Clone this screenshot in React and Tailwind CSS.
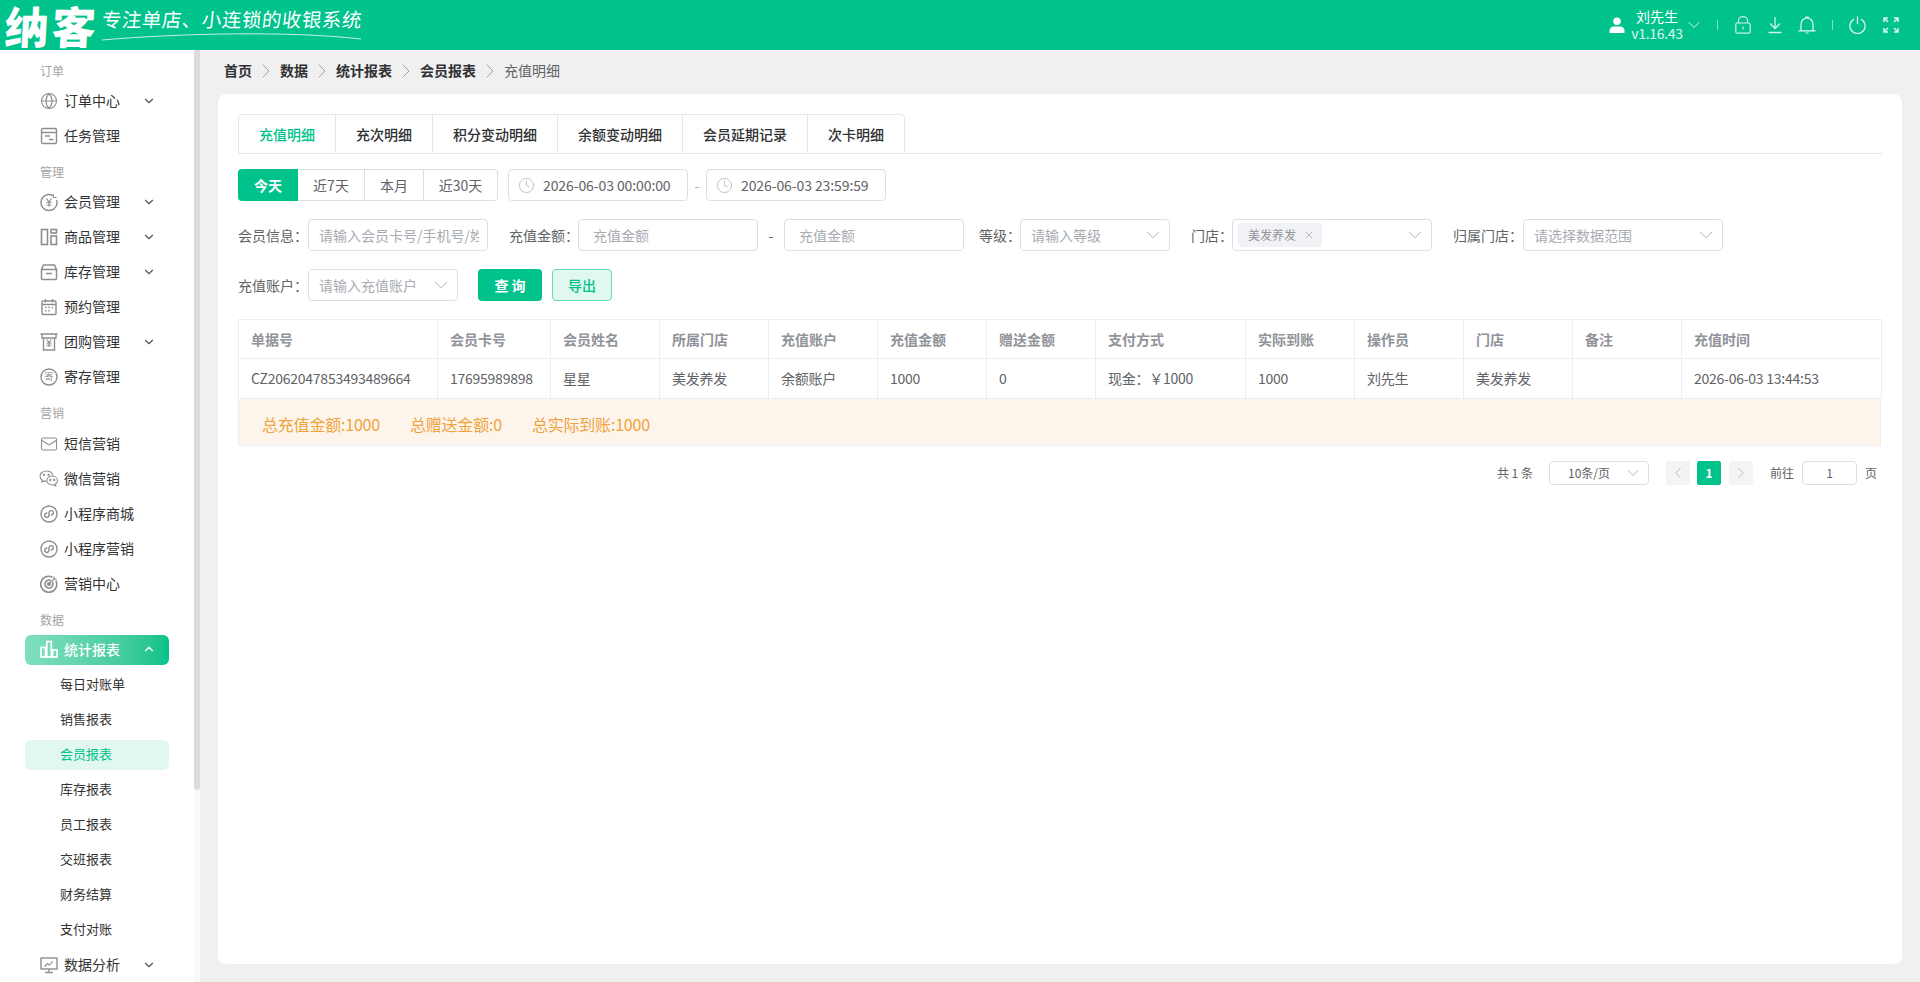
import React from "react";
import { ChevronDown, ChevronUp, ChevronRight, ChevronLeft, Clock, Globe, Mail, X } from "lucide-react";

const ic = { width: 18, height: 18, viewBox: "0 0 18 18", fill: "none", stroke: "#8e8e8e", strokeWidth: 1.4 };

const TaskIcon = () => (
  <svg {...ic}>
    <rect x="1.5" y="1.5" width="15" height="15" rx="1.5" />
    <path d="M1.5 5.5h15M5 9h5M9 12.5h4.5" />
  </svg>
);
const MemberIcon = () => (
  <svg {...ic}>
    <path d="M13 2.6A8 8 0 1 0 16.6 7" />
    <path d="M6.5 5.5 9 9l2.5-3.5M6.5 9.5h5M6.5 12h5M9 9v4.5" strokeWidth="1.2" />
    <path d="M13.5 1.5v3h3" strokeWidth="1.1" />
  </svg>
);
const GoodsIcon = () => (
  <svg {...ic} strokeWidth="1.6">
    <rect x="1.5" y="1.5" width="6" height="15" />
    <rect x="11" y="1.5" width="5.5" height="3.5" />
    <rect x="11" y="8" width="5.5" height="8.5" />
  </svg>
);
const StockIcon = () => (
  <svg {...ic} strokeWidth="1.5">
    <path d="M3.5 2h11l2 4.5v9a1 1 0 0 1-1 1h-13a1 1 0 0 1-1-1v-9z" />
    <path d="M1.5 6.5h15M6 10.5h6" />
  </svg>
);
const CalendarIcon = () => (
  <svg {...ic}>
    <rect x="2" y="3" width="14" height="13.5" rx="1" />
    <path d="M2 6.5h14M5.5 1v3.5M12.5 1v3.5" />
    <path d="M5 9.5h1.5M8.3 9.5h1.5M11.6 9.5h1.5M5 12.8h1.5M8.3 12.8h1.5" />
  </svg>
);
const GroupIcon = () => (
  <svg {...ic}>
    <path d="M0.5 1h17M2 1v4h14V1M3.5 5v12h11V5" />
    <path d="M6.7 6.5 9 9.5l2.3-3M6.5 10h5M6.5 12.3h5M9 9.5v4.5" strokeWidth="1.1" />
  </svg>
);
const DepositIcon = () => (
  <svg {...ic}>
    <circle cx="9" cy="9" r="8" />
    <text x="9" y="12.2" textAnchor="middle" fontSize="9" fill="#8e8e8e" stroke="none" fontFamily="'Noto Sans CJK SC'">寄</text>
  </svg>
);
const WechatIcon = () => (
  <svg width="20" height="18" viewBox="0 0 20 18" fill="none" stroke="#8e8e8e" strokeWidth="1.1" className="-ml-[1px] -mr-[1px]">
    <path d="M7.5 1C3.9 1 1 3.3 1 6.2c0 1.6.9 3 2.3 4l-.5 1.8 2.1-1.1c.7.2 1.4.3 2.1.3" />
    <path d="M7.5 1c3 0 5.5 1.7 6.2 4.1" />
    <path d="M13.2 6c-3 0-5.5 2-5.5 4.5S10.2 15 13.2 15c.6 0 1.2-.1 1.7-.2l1.8 1-.4-1.6c1.3-.8 2.2-2.2 2.2-3.7C18.5 8 16.2 6 13.2 6z" />
    <circle cx="5" cy="4.8" r=".6" fill="#8e8e8e" />
    <circle cx="9.5" cy="4.8" r=".6" fill="#8e8e8e" />
    <circle cx="11.3" cy="10" r=".6" fill="#8e8e8e" />
    <circle cx="15.2" cy="10" r=".6" fill="#8e8e8e" />
  </svg>
);
const MiniIcon = () => (
  <svg {...ic}>
    <circle cx="9" cy="9" r="8" />
    <path d="M7.4 8.1A2.2 2.2 0 1 0 9 10.3V7.6a2.2 2.2 0 1 1 1.6 2.3" />
  </svg>
);
const TargetIcon = () => (
  <svg {...ic} strokeWidth="1.6">
    <path d="M12.5 2.2A8 8 0 1 0 15.8 5.5" />
    <path d="M10.8 5.5a4 4 0 1 0 1.7 1.7" />
    <circle cx="9" cy="9" r="1.3" fill="#8e8e8e" />
    <path d="M9 9l6-6M14 1.5V4h2.5" strokeWidth="1.2" />
  </svg>
);
const StatsIcon = () => (
  <svg width="18" height="18" viewBox="0 0 18 18" fill="none" stroke="#fff" strokeWidth="1.7">
    <rect x="1" y="7.5" width="4.5" height="9.5" />
    <rect x="6.8" y="1.5" width="4.5" height="15.5" />
    <rect x="12.6" y="10" width="4.5" height="7" />
  </svg>
);
const AnalysisIcon = () => (
  <svg {...ic}>
    <rect x="1" y="2" width="16" height="11" />
    <path d="M9 13v3M5 16.5h8" />
    <path d="M4.5 10.5 7.5 7.5l2 1.5 3.500-4" strokeWidth="1.1" />
  </svg>
);

// top bar
const UserIcon = () => (
  <svg width="16" height="16" viewBox="0 0 16 16" fill="#fff">
    <circle cx="8" cy="4.3" r="3.8" />
    <path d="M0.5 16v-2.2C0.5 11 3 9.5 5 9.5h6c2 0 4.5 1.5 4.5 4.3V16z" />
  </svg>
);
const LockIcon = () => (
  <svg width="16" height="18" viewBox="0 0 16 18" fill="none" stroke="#fff" strokeOpacity=".8" strokeWidth="1.2">
    <rect x="0.8" y="7" width="14.4" height="10.2" rx="1.5" />
    <path d="M3.5 7V4.5a4.5 3.8 0 0 1 9 0V7M8 10.5v3" />
  </svg>
);
const DownIcon = () => (
  <svg width="16" height="18" viewBox="0 0 16 18" fill="none" stroke="#fff" strokeOpacity=".8" strokeWidth="1.3">
    <path d="M8 1v11M3 7.5l5 5 5-5M1.5 16.5h13" />
  </svg>
);
const BellIcon = () => (
  <svg width="18" height="19" viewBox="0 0 18 19" fill="none" stroke="#fff" strokeOpacity=".9" strokeWidth="1.2">
    <path d="M3 14.5V8a6 6 0 0 1 12 0v6.5M0.5 14.8h17" />
    <path d="M8 2V1h2v1M7.5 17h3" />
  </svg>
);
const PowerIcon = () => (
  <svg width="17" height="18" viewBox="0 0 17 18" fill="none" stroke="#fff" strokeOpacity=".85" strokeWidth="1.3">
    <path d="M5 3.2a7.6 7.6 0 1 0 7 0" />
    <path d="M8.5 0.5v7.5" />
  </svg>
);
const ExpandIcon = () => (
  <svg width="16" height="16" viewBox="0 0 16 16" fill="none" stroke="#fff" strokeOpacity=".85" strokeWidth="1.5">
    <path d="M1 5V1h4M1 1l4 4M11 1h4v4M15 1l-4 4M1 11v4h4M1 15l4-4M15 11v4h-4M15 15l-4-4" />
  </svg>
);

const menu = [
  { label: "订单", h: "h-[31px]", items: [
    { name: "订单中心", icon: <Globe size={18} strokeWidth={1.5} color="#8e8e8e" />, arrow: true },
    { name: "任务管理", icon: <TaskIcon /> },
  ] },
  { label: "管理", h: "h-[31px]", items: [
    { name: "会员管理", icon: <MemberIcon />, arrow: true },
    { name: "商品管理", icon: <GoodsIcon />, arrow: true },
    { name: "库存管理", icon: <StockIcon />, arrow: true },
    { name: "预约管理", icon: <CalendarIcon /> },
    { name: "团购管理", icon: <GroupIcon />, arrow: true },
    { name: "寄存管理", icon: <DepositIcon /> },
  ] },
  { label: "营销", h: "h-[32px]", items: [
    { name: "短信营销", icon: <Mail size={18} strokeWidth={1.4} color="#8e8e8e" /> },
    { name: "微信营销", icon: <WechatIcon /> },
    { name: "小程序商城", icon: <MiniIcon /> },
    { name: "小程序营销", icon: <MiniIcon /> },
    { name: "营销中心", icon: <TargetIcon /> },
  ] },
];

const subItems = ["每日对账单", "销售报表", "会员报表", "库存报表", "员工报表", "交班报表", "财务结算", "支付对账"];

const SectionLabel = ({ text, h }) => (
  <div className={`${h} pl-[40px] pt-[7px] text-[12px] leading-[24px] text-[#a3a3a3]`}>{text}</div>
);

const MenuItem = ({ item }) => (
  <div className="h-[35px] flex items-center pl-[40px] text-[14px] text-[#333]">
    <span className="w-[18px] h-[18px] flex items-center justify-center shrink-0">{item.icon}</span>
    <span className="ml-[6px] w-[78px]">{item.name}</span>
    {item.arrow && <ChevronDown size={14} color="#555" />}
  </div>
);

const Sidebar = () => (
  <aside className="relative w-[200px] shrink-0 bg-white overflow-hidden pt-[2px]">
    {menu.map((sec) => (
      <div key={sec.label}>
        <SectionLabel text={sec.label} h={sec.h} />
        {sec.items.map((item) => (
          <MenuItem item={item} key={item.name} />
        ))}
      </div>
    ))}
    <SectionLabel text="数据" h="h-[31px]" />
    <div className="h-[34px] flex items-center">
      <div className="ml-[25px] mt-[2px] w-[144px] h-[30px] pb-[2px] rounded-[6px] bg-gradient-to-r from-[#80dfc2] to-[#00c28b] flex items-center pl-[15px] text-[14px] font-medium text-white">
        <StatsIcon />
        <span className="ml-[6px] w-[78px]">统计报表</span>
        <ChevronUp size={14} color="#fff" />
      </div>
    </div>
    {subItems.map((name) => (
      <div key={name} className="h-[35px] flex items-center">
        {name === "会员报表" ? (
          <div className="ml-[25px] mt-[2px] w-[144px] h-[30px] pb-[2px] rounded-[6px] bg-[#e0f8f0] flex items-center pl-[35px] text-[13px] text-[#00c28b]">
            {name}
          </div>
        ) : (
          <div className="pl-[60px] text-[13px] text-[#333]">{name}</div>
        )}
      </div>
    ))}
    <div className="mt-[1px]">
      <MenuItem item={{ name: "数据分析", icon: <AnalysisIcon />, arrow: true }} />
    </div>
    {/* scrollbar */}
    <div className="absolute top-0 right-0 bottom-0 w-[6px] bg-[#fafafa]">
      <div className="h-[740px] bg-[#dcdcdc] rounded-b-[3px]" />
    </div>
  </aside>
);

const TopBar = () => (
  <header className="h-[50px] shrink-0 bg-[#00c28b] flex items-center text-white">
    <div className="ml-[5px] w-[96px] text-[44px] leading-[44px] font-black tracking-[3px] -skew-x-3 whitespace-nowrap">纳客</div>
    <div className="ml-[1px] flex flex-col">
      <div className="text-[19.5px] leading-[24px] -mt-[2px] -skew-x-6 tracking-[0.5px] whitespace-nowrap">专注单店、小连锁的收银系统</div>
      <svg width="260" height="9" viewBox="0 0 260 9" fill="none" className="mt-[1px]">
        <path d="M0 8C80 1 190-1 259 7" stroke="#fff" strokeOpacity=".85" strokeWidth=".9" />
      </svg>
    </div>
    <div className="ml-auto flex items-center">
      <UserIcon />
      <div className="ml-[7px] w-[50px] flex flex-col items-center text-[14px] leading-[17px] whitespace-nowrap">
        <span>刘先生</span>
        <span className="text-white/85 tracking-[-0.3px]">v1.16.43</span>
      </div>
      <ChevronDown size={20} className="ml-[2px]" color="#fff" strokeWidth={1} />
      <span className="ml-[13px] w-[1px] h-[10px] bg-white/50" />
      <span className="ml-[17px]"><LockIcon /></span>
      <span className="ml-[16px]"><DownIcon /></span>
      <span className="ml-[15px]"><BellIcon /></span>
      <span className="ml-[16px] w-[1px] h-[10px] bg-white/50" />
      <span className="ml-[16px]"><PowerIcon /></span>
      <span className="ml-[17px] mr-[21px]"><ExpandIcon /></span>
    </div>
  </header>
);

const crumbs = ["首页", "数据", "统计报表", "会员报表"];

const Breadcrumb = () => (
  <div className="h-[44px] flex items-center pl-[6px] pb-[3px] text-[14px]">
    {crumbs.map((c) => (
      <React.Fragment key={c}>
        <span className="font-bold text-[#303133]">{c}</span>
        <span className="w-[28px] flex justify-center"><ChevronRight size={24} strokeWidth={1} color="#a0a0a0" /></span>
      </React.Fragment>
    ))}
    <span className="text-[#606266]">充值明细</span>
  </div>
);

const tabs = [
  { name: "充值明细", w: "w-[96px]" },
  { name: "充次明细", w: "w-[97px]" },
  { name: "积分变动明细", w: "w-[125px]" },
  { name: "余额变动明细", w: "w-[125px]" },
  { name: "会员延期记录", w: "w-[125px]" },
  { name: "次卡明细", w: "w-[97px]" },
];

const Tabs = () => (
  <div className="h-[40px] border-b border-[#e4e7ed]">
    <div className="inline-flex h-[40px] border border-[#e4e7ed] rounded-t-[4px]">
      {tabs.map((t, i) => (
        <div
          key={t.name}
          className={`${t.w} flex items-center justify-center text-[14px] font-medium ${i === 0 ? "text-[#00c28b]" : "text-[#303133] border-l border-[#e4e7ed]"}`}
        >
          {t.name}
        </div>
      ))}
    </div>
  </div>
);

const ranges = [
  { name: "近7天", w: "w-[67px]" },
  { name: "本月", w: "w-[59px]" },
  { name: "近30天", w: "w-[74px]" },
];

const DateBox = ({ value }) => (
  <div className="w-[180px] h-[32px] border border-[#dcdfe6] rounded-[4px] flex items-center pl-[9px] text-[14px] text-[#606266]">
    <Clock size={17} strokeWidth={1} color="#a8abb2" />
    <span className="ml-[8px] whitespace-nowrap tracking-[-0.1px]">{value}</span>
  </div>
);

const Input = ({ placeholder, w = "w-[180px]", px = "pl-[10px] pr-[8px]" }) => (
  <div className={`${w} h-[32px] shrink-0 border border-[#dcdfe6] rounded-[4px] flex items-center ${px} text-[14px] text-[#a8abb2]`}>
    <span className="block overflow-hidden whitespace-nowrap">{placeholder}</span>
  </div>
);

const Select = ({ placeholder, w }) => (
  <div className={`${w} h-[32px] shrink-0 border border-[#dcdfe6] rounded-[4px] flex items-center justify-between pl-[10px] pr-[5px] text-[14px] text-[#a8abb2] whitespace-nowrap`}>
    <span>{placeholder}</span>
    <ChevronDown size={22} strokeWidth={1} color="#a8abb2" />
  </div>
);

const Label = ({ text, w = "w-[70px]", ml = "" }) => (
  <span className={`${w} ${ml} shrink-0 text-[14px] text-[#606266] whitespace-nowrap`}>{text}</span>
);

const Filters = () => (
  <div className="flex flex-col gap-[18px] mt-[15px]">
    <div className="flex items-center h-[32px]">
      <div className="flex h-[32px] text-[14px]">
        <div className="w-[60px] bg-[#00c28b] rounded-l-[4px] flex items-center justify-center text-white font-bold">今天</div>
        {ranges.map((r, i) => (
          <div
            key={r.name}
            className={`${r.w} border-y border-r border-[#dcdfe6] flex items-center justify-center text-[#606266] ${i === 2 ? "rounded-r-[4px]" : ""}`}
          >
            {r.name}
          </div>
        ))}
      </div>
      <div className="ml-[10px]"><DateBox value="2026-06-03 00:00:00" /></div>
      <span className="w-[18px] text-center text-[14px] text-[#a8abb2]">-</span>
      <DateBox value="2026-06-03 23:59:59" />
    </div>

    <div className="flex items-center h-[32px]">
      <Label text="会员信息：" />
      <Input placeholder="请输入会员卡号/手机号/姓名" />
      <Label text="充值金额：" w="w-[69px]" ml="ml-[21px]" />
      <Input placeholder="充值金额" px="px-[14px]" />
      <span className="w-[26px] text-center text-[14px] text-[#606266]">-</span>
      <Input placeholder="充值金额" px="px-[14px]" />
      <Label text="等级：" w="w-[41px]" ml="ml-[15px]" />
      <Select placeholder="请输入等级" w="w-[150px]" />
      <Label text="门店：" w="w-[41px]" ml="ml-[21px]" />
      <div className="w-[200px] h-[32px] shrink-0 border border-[#dcdfe6] rounded-[4px] flex items-center justify-between pl-[5px] pr-[5px]">
        <span className="w-[84px] h-[24px] bg-[#f0f2f5] rounded-[4px] flex items-center pl-[10px] text-[12px] text-[#909399]">
          美发养发
          <X size={12} strokeWidth={1.2} className="ml-[7px]" />
        </span>
        <ChevronDown size={22} strokeWidth={1} color="#a8abb2" />
      </div>
      <Label text="归属门店：" ml="ml-[21px]" />
      <Select placeholder="请选择数据范围" w="w-[200px]" />
    </div>

    <div className="flex items-center h-[32px]">
      <Label text="充值账户：" />
      <Select placeholder="请输入充值账户" w="w-[150px]" />
      <div className="ml-[20px] w-[64px] h-[32px] rounded-[4px] bg-[#00c28b] flex items-center justify-center text-[14px] font-bold text-white whitespace-pre">查 询</div>
      <div className="ml-[10px] w-[60px] h-[32px] rounded-[4px] bg-[#e0f8f0] border border-[#66dab9] flex items-center justify-center text-[14px] font-medium text-[#00c28b]">导出</div>
    </div>
  </div>
);

const columns = [
  { name: "单据号", w: "w-[199px]", value: "CZ2062047853493489664" },
  { name: "会员卡号", w: "w-[113px]", value: "17695989898" },
  { name: "会员姓名", w: "w-[109px]", value: "星星" },
  { name: "所属门店", w: "w-[109px]", value: "美发养发" },
  { name: "充值账户", w: "w-[109px]", value: "余额账户" },
  { name: "充值金额", w: "w-[109px]", value: "1000" },
  { name: "赠送金额", w: "w-[109px]", value: "0" },
  { name: "支付方式", w: "w-[150px]", value: "现金：￥1000" },
  { name: "实际到账", w: "w-[109px]", value: "1000" },
  { name: "操作员", w: "w-[109px]", value: "刘先生" },
  { name: "门店", w: "w-[109px]", value: "美发养发" },
  { name: "备注", w: "w-[109px]", value: "" },
  { name: "充值时间", w: "w-[200px]", value: "2026-06-03 13:44:53" },
];

const Table = () => (
  <div className="mt-[18px]">
    <table className="w-[1643px] table-fixed border-collapse text-[14px]">
      <colgroup>
        {columns.map((c) => (
          <col key={c.name} className={c.w} />
        ))}
      </colgroup>
      <thead>
        <tr className="h-[39px]">
          {columns.map((c) => (
            <th key={c.name} className="border border-[#ebeef5] pl-[12px] text-left font-bold text-[#909399]">
              {c.name}
            </th>
          ))}
        </tr>
      </thead>
      <tbody>
        <tr className="h-[40px]">
          {columns.map((c) => (
            <td key={c.name} className="border border-[#ebeef5] pl-[12px] text-[#606266] tracking-[-0.25px] whitespace-nowrap">
              {c.value}
            </td>
          ))}
        </tr>
      </tbody>
    </table>
    <div className="w-[1643px] h-[47px] border-x border-b border-[#ebeef5] bg-[#fdf5ec] flex items-center gap-[30px] pl-[23px] pt-[3px] text-[16px] text-[#f0a33c] tracking-[-0.2px]">
      <span>总充值金额:1000</span>
      <span>总赠送金额:0</span>
      <span>总实际到账:1000</span>
    </div>
  </div>
);

const Pagination = () => (
  <div className="mt-[15px] h-[24px] flex items-center justify-end pr-[5px] text-[12px] text-[#606266]">
    <span className="whitespace-pre">共 1 条</span>
    <div className="ml-[16px] w-[100px] h-[24px] border border-[#dcdfe6] rounded-[4px] flex items-center justify-between pl-[18px] pr-[5px]">
      <span>10条/页</span>
      <ChevronDown size={20} strokeWidth={1} color="#a8abb2" />
    </div>
    <div className="ml-[17px] w-[24px] h-[24px] rounded-[2px] bg-[#f4f4f5] flex items-center justify-center">
      <ChevronLeft size={18} strokeWidth={1} color="#a8abb2" />
    </div>
    <div className="ml-[7px] w-[24px] h-[24px] rounded-[2px] bg-[#00c28b] flex items-center justify-center font-bold text-white">1</div>
    <div className="ml-[8px] w-[24px] h-[24px] rounded-[2px] bg-[#f4f4f5] flex items-center justify-center">
      <ChevronRight size={18} strokeWidth={1} color="#a8abb2" />
    </div>
    <span className="ml-[17px]">前往</span>
    <div className="ml-[8px] w-[55px] h-[24px] border border-[#dcdfe6] rounded-[4px] flex items-center justify-center">1</div>
    <span className="ml-[8px]">页</span>
  </div>
);

const App = () => {
  return (
    <div className="h-screen w-full overflow-hidden flex flex-col font-['Noto_Sans_CJK_SC','Noto_Sans',sans-serif]">
      <TopBar />
      <div className="flex-1 min-h-0 flex">
        <Sidebar />
        <main className="flex-1 min-w-0 bg-[#f0f0f0] px-[18px] pb-[18px] flex flex-col">
          <Breadcrumb />
          <div className="flex-1 bg-white rounded-[8px] pt-[20px] px-[20px]">
            <Tabs />
            <Filters />
            <Table />
            <Pagination />
          </div>
        </main>
      </div>
    </div>
  );
};

export default App;
